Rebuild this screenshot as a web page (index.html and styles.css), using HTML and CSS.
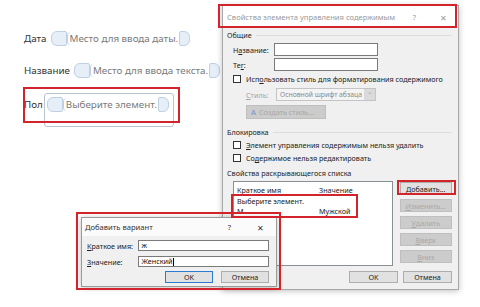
FILE: index.html
```html
<!DOCTYPE html>
<html lang="ru">
<head>
    <meta charset="UTF-8">
    <title>Свойства элемента управления содержимым</title>
    <link rel="stylesheet" href="styles.css">
</head>
<body>
    <div class="doc">
        <p class="line">Дата <span class="cc"><span class="cap-l"></span><span class="ph">Место для ввода даты.</span><span class="cap-r"></span></span></p>
        <p class="line">Название <span class="cc"><span class="cap-l"></span><span class="ph">Место для ввода текста.</span><span class="cap-r"></span></span></p>
        <div class="line pol">
            <span>Пол</span>
            <div class="frame">
                <span class="handle"></span>
                <span class="cc"><span class="cap-l"></span><span class="ph">Выберите элемент.</span><span class="cap-r"></span></span>
            </div>
        </div>
    </div>

    <div class="dlg main-dlg">
        <div class="titlebar">
            <span class="title">Свойства элемента управления содержимым</span>
            <span class="tb-help">?</span>
            <span class="tb-close">✕</span>
        </div>
        <div class="body">
            <div class="group first">Общие</div>
            <div class="field"><span class="lbl">Н<u>а</u>звание:</span><span class="input"></span></div>
            <div class="field"><span class="lbl">Те<u>г</u>:</span><span class="input"></span></div>
            <div class="check"><span class="box"></span><span>Исп<u>о</u>льзовать стиль для форматирования содержимого</span></div>
            <div class="field style-row">
                <span class="lbl off"><u>С</u>тиль:</span>
                <span class="select"><span>Основной шрифт абзаца</span><span class="arrow">&#8964;</span></span>
            </div>
            <div class="btn off new-style"><span class="ico">A</span>Создать стиль...</div>

            <div class="group">Блокировка</div>
            <div class="check"><span class="box"></span><span><u>Э</u>лемент управления содержимым нельзя удалить</span></div>
            <div class="check"><span class="box"></span><span>Со<u>д</u>ержимое нельзя редактировать</span></div>

            <div class="group plain">Свойства раскрывающегося списка</div>
            <div class="list-area">
                <div class="listbox">
                    <div class="row head"><span class="c1">Краткое имя</span><span>Значение</span></div>
                    <div class="row"><span class="c1">Выберите элемент.</span><span></span></div>
                    <div class="row"><span class="c1">М</span><span>Мужской</span></div>
                </div>
                <div class="side-btns">
                    <div class="btn"><u>Д</u>обавить...</div>
                    <div class="btn off"><u>И</u>зменить...</div>
                    <div class="btn off"><u>У</u>далить</div>
                    <div class="btn off"><u>В</u>верх</div>
                    <div class="btn off"><u>В</u>низ</div>
                </div>
            </div>
            <div class="footer">
                <div class="btn">OK</div>
                <div class="btn">Отмена</div>
            </div>
        </div>
    </div>

    <div class="dlg add-dlg">
        <div class="titlebar">
            <span class="title">Добавить вариант</span>
            <span class="tb-help">?</span>
            <span class="tb-close">✕</span>
        </div>
        <div class="body">
            <div class="field"><span class="lbl"><u>К</u>раткое имя:</span><span class="input">ж</span></div>
            <div class="field"><span class="lbl"><u>З</u>начение:</span><span class="input">Женский<span class="caret"></span></span></div>
            <div class="footer">
                <div class="btn default">OK</div>
                <div class="btn">Отмена</div>
            </div>
        </div>
    </div>

    <div class="hl hl-pol"></div>
    <div class="hl hl-title"></div>
    <div class="hl hl-add"></div>
    <div class="hl hl-rows"></div>
    <div class="hl hl-dlg"></div>
</body>
</html>
```

FILE: styles.css
```css
body{
    margin: 0;
    width: 480px;
    height: 307px;
    position: relative;
    overflow: hidden;
    background: #fff;
    font-family: "Noto Sans", "Liberation Sans", sans-serif;
}

/* document on the left */
.doc{
    padding: 29px 0 0 24px;
    font-size: 9.8px;
    color: #333;
}
.line{
    margin: 0 0 14px;
    height: 18px;
    display: flex;
    align-items: center;
    white-space: nowrap;
}
.cc{
    display: inline-flex;
    align-items: center;
    margin-left: 4px;
}
.cap-l,
.cap-r{
    display: inline-block;
    height: 13px;
    background: #e6eef7;
    border: 1px solid #bfd0e3;
}
.cap-l{
    width: 14px;
    border-radius: 6px 2px 2px 6px;
}
.cap-r{
    width: 9px;
    border-radius: 2px 6px 6px 2px;
}
.ph{
    color: #7a7a7a;
    padding: 0 1px 0 2px;
    border-left: 1px solid #bfd0e3;
    border-radius: 4px 0 0 4px;
}
.pol{
    align-items: flex-start;
    height: auto;
}
.pol > span{
    margin-top: 5px;
}
.frame{
    position: relative;
    width: 126px;
    height: 29px;
    margin-left: 1px;
    padding: 3px 0 0 2px;
    border: 1px solid #b9c3d0;
    border-radius: 3px;
}
.frame .cc{
    margin-left: 0;
}
.handle{
    position: absolute;
    left: -6px;
    top: 1px;
    width: 4px;
    height: 7px;
    background: radial-gradient(circle, #7d9cc8 45%, transparent 50%) 0 0 / 2px 2px;
}

/* dialogs */
.dlg{
    position: absolute;
    background: #f0f0f0;
    border: 1px solid #a8a8a8;
    box-shadow: 0 1px 6px rgba(0,0,0,0.25);
    font-size: 7.2px;
    color: #222;
    box-sizing: border-box;
    white-space: nowrap;
}
.main-dlg{
    left: 222px;
    top: 5px;
    width: 237px;
    height: 285px;
}
.titlebar{
    height: 22px;
    display: flex;
    align-items: center;
    padding: 0 0 0 4px;
    background: #fff;
    color: #9a9a9a;
    font-size: 7.6px;
}
.title{
    flex: 1;
}
.tb-help{
    width: 29px;
    text-align: center;
}
.tb-close{
    width: 29px;
    text-align: center;
    font-size: 8px;
}
.main-dlg .body{
    padding: 0 6px 0 4px;
}
.group{
    display: flex;
    align-items: center;
    height: 10px;
    margin-top: 8px;
}
.group.first{
    margin-top: 2px;
}
.group::after{
    content: "";
    flex: 1;
    height: 1px;
    margin-left: 4px;
    background: #dcdcdc;
}
.group.plain::after{
    display: none;
}
.group.plain{
    margin-top: 5px;
}
.field{
    display: flex;
    align-items: center;
    margin: 2px 0 0 6px;
}
.main-dlg .group.first + .field{
    margin-top: 3px;
}
.lbl{
    width: 41px;
}
.input{
    width: 104px;
    height: 13px;
    background: #fff;
    border: 1px solid #7a7a7a;
    box-sizing: border-box;
    padding-left: 2px;
    line-height: 11px;
    color: #111;
}
.check{
    display: flex;
    align-items: center;
    height: 10px;
    margin: 3px 0 0 6px;
}
.box{
    width: 8px;
    height: 8px;
    margin-right: 5px;
    background: #fff;
    border: 1px solid #333;
    box-sizing: border-box;
}
.style-row{
    margin: 4px 0 0 19px;
}
.style-row .lbl{
    width: 30px;
}
.off{
    color: #a3a3a3;
}
.select{
    display: flex;
    align-items: center;
    width: 100px;
    height: 13px;
    box-sizing: border-box;
    border: 1px solid #c4c4c4;
    background: #f4f4f4;
    color: #8a8a8a;
    padding-left: 3px;
    font-size: 6.8px;
}
.select span:first-child{
    flex: 1;
}
.arrow{
    width: 11px;
    height: 11px;
    background: #dadada;
    color: #aaa;
    text-align: center;
    line-height: 6px;
}
.btn{
    height: 12px;
    display: flex;
    align-items: center;
    justify-content: center;
    background: #e1e1e1;
    border: 1px solid #adadad;
    box-sizing: border-box;
}
.btn.off{
    background: #cccccc;
    border-color: #bfbfbf;
    color: #a8a8a8;
}
.new-style{
    width: 80px;
    height: 14px;
    margin: 4px 0 0 19px;
    justify-content: flex-start;
    padding-left: 4px;
}
.ico{
    color: #8fa5c8;
    margin-right: 3px;
    font-weight: bold;
}
.list-area{
    display: flex;
    gap: 7px;
    margin: 3px 0 0 6px;
}
.listbox{
    width: 161px;
    height: 85px;
    background: #fff;
    border: 1px solid #8a8f96;
    box-sizing: border-box;
    padding-top: 3px;
}
.row{
    display: flex;
    height: 10px;
    align-items: center;
    padding-left: 3px;
}
.row.head{
    margin-bottom: 1px;
}
.c1{
    width: 82px;
}
.side-btns{
    display: flex;
    flex-direction: column;
    gap: 4px;
    width: 53px;
    margin-top: 1px;
}
.side-btns .btn{
    height: 13px;
}
.footer{
    display: flex;
    justify-content: flex-end;
    gap: 5px;
    margin-top: 5px;
}
.footer .btn{
    width: 49px;
}

.add-dlg{
    left: 81px;
    top: 217px;
    width: 196px;
    height: 70px;
    border-color: #9a9a9a;
}
.add-dlg .titlebar{
    height: 18px;
    color: #333;
    padding-left: 3px;
    background: #fbfbfb;
}
.add-dlg .tb-help,
.add-dlg .tb-close{
    width: 31px;
}
.add-dlg .body{
    padding: 0 7px 0 5px;
}
.add-dlg .field{
    margin: 4px 0 0 0;
}
.add-dlg .field + .field{
    margin-top: 5px;
}
.add-dlg .lbl{
    width: 52px;
}
.add-dlg .input{
    width: 132px;
    height: 11px;
    line-height: 9px;
}
.caret{
    display: inline-block;
    width: 1px;
    height: 8px;
    margin-left: 1px;
    vertical-align: middle;
    background: #000;
}
.add-dlg .footer{
    gap: 8px;
    margin-top: 4px;
}
.add-dlg .btn{
    width: 48px;
}
.add-dlg .btn.default{
    border: 1px solid #2b7ad0;
}

/* red marks */
.hl{
    position: absolute;
    border: 2px solid #d3242c;
    box-sizing: border-box;
}
.hl-pol{
    left: 23px;
    top: 87px;
    width: 157px;
    height: 36px;
}
.hl-title{
    left: 218px;
    top: 4px;
    width: 239px;
    height: 24px;
}
.hl-add{
    left: 397px;
    top: 180px;
    width: 59px;
    height: 15px;
}
.hl-rows{
    left: 231px;
    top: 194px;
    width: 127px;
    height: 24px;
}
.hl-dlg{
    left: 76px;
    top: 212px;
    width: 205px;
    height: 78px;
}
```
